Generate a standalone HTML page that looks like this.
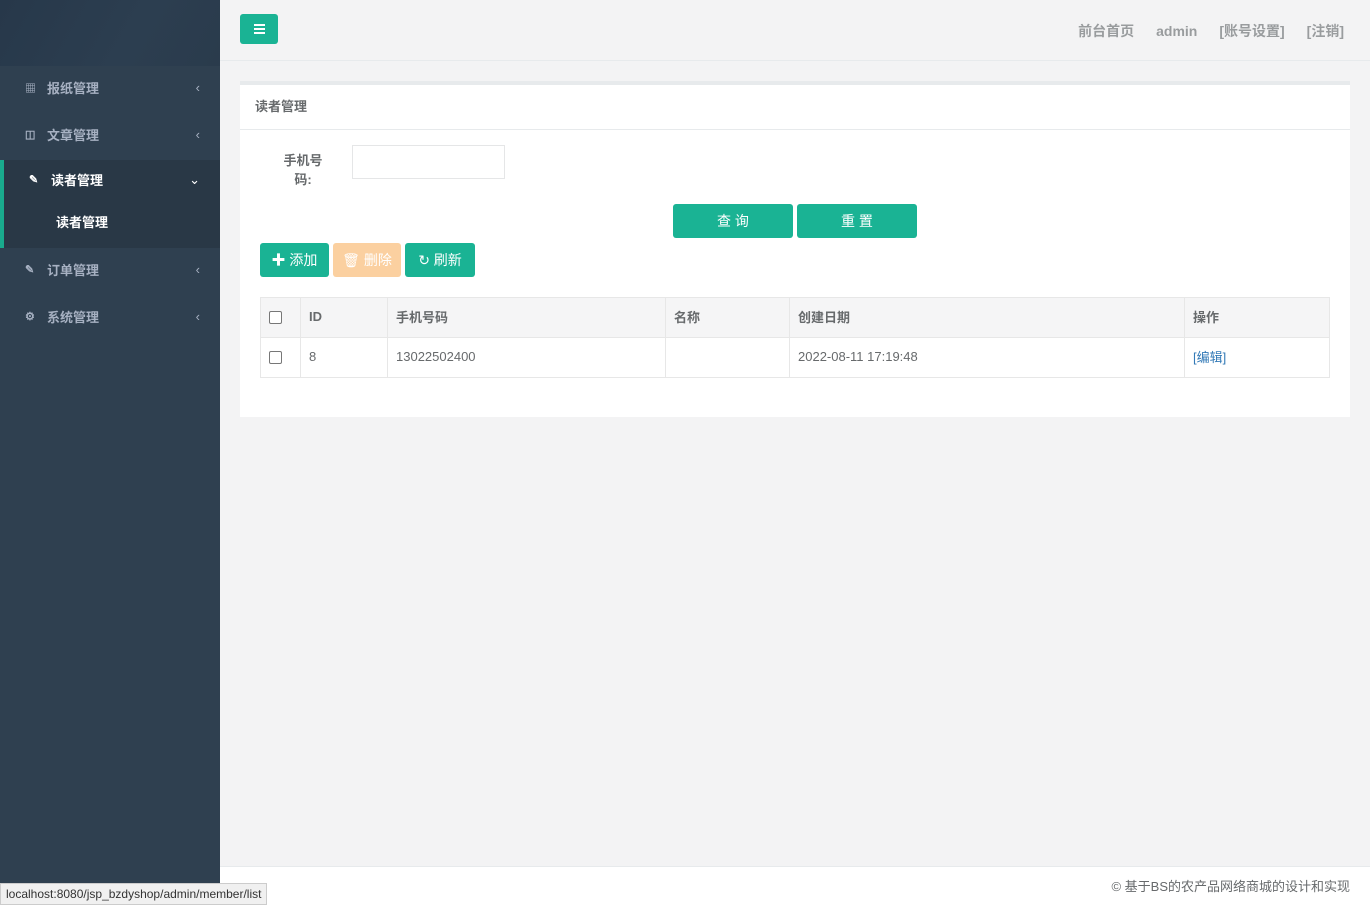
<!DOCTYPE html>
<html><head><meta charset="utf-8"><style>
*{box-sizing:border-box;margin:0;padding:0}
body{width:1370px;height:905px;background:#f3f3f4;font-family:"Liberation Sans","Noto Sans CJK SC",sans-serif;font-size:13px;color:#676a6c;position:relative;overflow:hidden}
.side{position:absolute;left:0;top:0;width:220px;height:905px;background:#2f4050}
.logo{height:66px;background:linear-gradient(120deg,#27384a,#2c3e50 60%,#2a3b4c)}
.item{height:47px;display:flex;align-items:center;padding-left:25px;color:#a7b1c2;font-weight:bold;font-size:13px;position:relative;padding-bottom:4px}
.item .ic{width:14px;margin-right:8px;font-size:11px}
.item .ar{position:absolute;right:20px;font-weight:normal}
.act{background:#293846;border-left:4px solid #19aa8d}
.act .item{color:#fff;padding-left:25px;height:43px}
.sub{height:45px;padding-left:52px;color:#fff;font-weight:bold;display:flex;align-items:center;padding-bottom:8px}
.top{position:absolute;left:220px;top:0;right:0;height:61px;border-bottom:1px solid #e7eaec}
.hb{position:absolute;left:20px;top:14px;width:38px;height:30px;background:#1ab394;border-radius:3px}
.hb i{position:absolute;left:14px;width:11px;height:2px;background:#fff}
.nav{position:absolute;right:26px;top:21px;color:#999c9e;font-weight:bold;font-size:14px}
.nav span{margin-left:22px}
.box{position:absolute;left:240px;top:81px;width:1110px;height:336px;background:#fff;border-top:4px solid #e7eaec}
.bt{height:45px;border-bottom:1px solid #e7eaec;padding:11px 15px;font-weight:bold;color:#676a6c}
.btn{position:absolute;height:34px;border-radius:3px;color:#fff;background:#1ab394;display:flex;align-items:center;justify-content:center;font-size:14px}
table{position:absolute;left:20px;top:212px;width:1070px;border-collapse:collapse}
td,th{border:1px solid #e7e7e7;height:40px;padding:0 8px 3px;text-align:left;font-size:13px}
th{background:#f5f5f6;font-weight:bold}
.cb{width:13px;height:13px;border:1px solid #777;border-radius:2px;display:inline-block;vertical-align:middle;background:#fff}
.foot{position:absolute;left:220px;right:0;bottom:0;height:39px;background:#fff;border-top:1px solid #e7eaec;text-align:right;padding:9px 20px;color:#676a6c}
.status{position:absolute;left:0;bottom:0;height:22px;background:#f0f0f0;border:1px solid #ccc;padding:3px 5px;font-size:12px;color:#333}
</style></head><body>
<div class="side">
<div class="logo"></div>
<div class="item"><span class="ic">▦</span>报纸管理<span class="ar">‹</span></div>
<div class="item"><span class="ic">◫</span>文章管理<span class="ar">‹</span></div>
<div class="act"><div class="item"><span class="ic">✎</span>读者管理<span class="ar">⌄</span></div><div class="sub">读者管理</div></div>
<div class="item"><span class="ic">✎</span>订单管理<span class="ar">‹</span></div>
<div class="item"><span class="ic">⚙</span>系统管理<span class="ar">‹</span></div>
</div>
<div class="top"><div class="hb"><i style="top:10px"></i><i style="top:14px"></i><i style="top:18px"></i></div>
<div class="nav"><span>前台首页</span><span>admin</span><span>[账号设置]</span><span>[注销]</span></div></div>
<div class="box">
<div class="bt">读者管理</div>
<div style="position:absolute;left:40px;top:66px;width:46px;text-align:center;font-weight:bold;line-height:19px">手机号码:</div>
<div style="position:absolute;left:112px;top:60px;width:153px;height:34px;border:1px solid #e5e6e7"></div>
<div class="btn" style="left:433px;top:119px;width:120px">查 询</div>
<div class="btn" style="left:557px;top:119px;width:120px">重 置</div>
<div class="btn" style="left:20px;top:158px;width:69px">✚ 添加</div>
<div class="btn" style="left:93px;top:158px;width:68px;background:#fbd0a0">🗑 删除</div>
<div class="btn" style="left:165px;top:158px;width:70px">↻ 刷新</div>
<table><tr><th style="width:40px"><span class="cb"></span></th><th style="width:87px">ID</th><th style="width:278px">手机号码</th><th style="width:124px">名称</th><th style="width:395px">创建日期</th><th>操作</th></tr>
<tr><td><span class="cb"></span></td><td>8</td><td>13022502400</td><td></td><td>2022-08-11 17:19:48</td><td style="color:#337ab7">[编辑]</td></tr></table>
</div>
<div class="foot">© 基于BS的农产品网络商城的设计和实现</div>
<div class="status">localhost:8080/jsp_bzdyshop/admin/member/list</div>
</body></html>
